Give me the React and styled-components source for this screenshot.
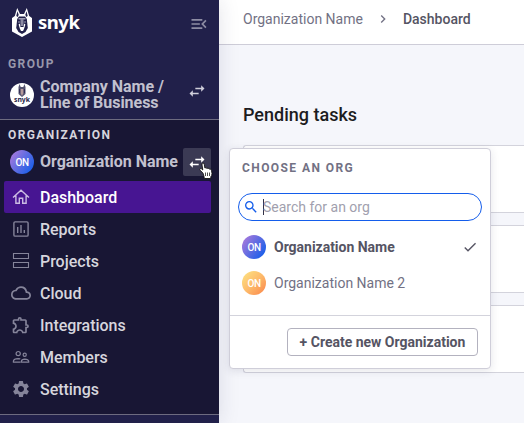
import React from "react";
import styled, { createGlobalStyle, css } from "styled-components";
import {
  MdMenuOpen, MdSwapHoriz, MdOutlineCloud, MdOutlineExtension, MdSettings,
  MdChevronRight, MdSearch, MdCheck,
} from "react-icons/md";

const GlobalStyle = createGlobalStyle`
  * { box-sizing: border-box; }
  body { margin: 0; font-family: Roboto, sans-serif; overflow: hidden; }
  h2, p { margin: 0; }
  svg { display: block; flex: none; }
`;

const Page = styled.div`
  display: flex;
  width: 524px;
  height: 423px;
  background: #f5f6fb;
  overflow: hidden;
`;

const Sidebar = styled.aside`
  position: relative;
  z-index: 1;
  flex: none;
  width: 219px;
  height: 423px;
  background: #21204a;
  box-shadow: 0 0 20px rgba(33, 32, 74, 0.13);
`;

const Brand = styled.div`
  height: 56px;
  padding: 7px 10px 0 12px;
  display: flex;
  align-items: flex-start;
  justify-content: space-between;
`;

const Logo = styled.div`
  display: flex;
  gap: 6px;
`;

const Wordmark = styled.span`
  font: 700 18.5px/28px "Noto Sans", sans-serif;
  letter-spacing: -0.5px;
  color: #fff;
  margin-top: 1px;
`;

const Collapse = styled.div`
  margin-top: 7px;
  color: #8d8ca3;
`;

const Group = styled.div`
  height: 63px;
`;

const SectionLabel = styled.p`
  padding-left: 8px;
  font-size: 12px;
  line-height: 16px;
  font-weight: 700;
  letter-spacing: 1.4px;
  color: ${(p) => p.$color};
`;

const OrgRow = styled.div`
  display: flex;
  align-items: center;
  height: ${(p) => p.$height};
  padding: 0 8px 0 10px;
`;

const OrgName = styled.div`
  flex: 1;
  margin-left: 6px;
  font-size: 16px;
  line-height: 16px;
  font-weight: 700;
  letter-spacing: -0.02px;
  white-space: nowrap;
  color: #c2c1cf;
`;

const SwapButton = styled.div`
  position: relative;
  flex: none;
  width: 28px;
  height: 28px;
  margin-top: ${(p) => (p.$active ? "0" : "-8px")};
  display: flex;
  align-items: center;
  justify-content: center;
  border-radius: 2px;
  color: ${(p) => (p.$active ? "#fff" : "#cfceda")};
  background: ${(p) => (p.$active ? "#3b3a54" : "transparent")};
`;

const Cursor = styled.svg`
  position: absolute;
  left: 15px;
  top: 14px;
`;

const OrgSection = styled.section`
  height: 296px;
  padding-top: 7px;
  background: #181634;
  border-top: 1px solid #6d6b80;
  border-bottom: 1px solid #6d6b80;
`;

const Nav = styled.nav`
  margin: 0 8px 0 4px;
`;

const NavItem = styled.div`
  display: flex;
  align-items: center;
  height: 32px;
  padding-left: 7px;
  gap: 9px;
  border-radius: 2px;
  font-size: 16px;
  font-weight: 500;
  letter-spacing: -0.03px;
  color: #d6d5dd;
  svg { color: #85849a; }
  ${(p) => p.$active && css`
    background: #471592;
    color: #fff;
    svg { color: #cbbce3; }
  `}
`;

const avatarColors = {
  violet: "linear-gradient(125deg, #a879dc 8%, #596be2 52%, #145deb 92%)",
  amber: "linear-gradient(135deg, #fddb7d 12%, #fdbb6b 50%, #fb8f50 90%)",
};

const Avatar = styled.div`
  flex: none;
  width: 24px;
  height: 24px;
  border-radius: 50%;
  display: flex;
  align-items: center;
  justify-content: center;
  background: ${(p) => avatarColors[p.$tone]};
  color: #fff;
  font-size: 10px;
  font-weight: 500;
  letter-spacing: -0.4px;
`;

const Main = styled.main`
  flex: 1;
  min-width: 0;
`;

const Breadcrumb = styled.header`
  height: 45px;
  padding: 0 0 6px 24px;
  display: flex;
  align-items: center;
  background: #fff;
  border-bottom: 1px solid #cecdd8;
  font-size: 14px;
  color: #727184;
  svg { margin: 0 12px; }
`;

const Current = styled.span`
  font-weight: 500;
  color: #555463;
`;

const Title = styled.h2`
  margin: 58px 0 0 24px;
  font-size: 18px;
  line-height: 24px;
  font-weight: 500;
  color: #1c1c21;
`;

const Cards = styled.div`
  display: grid;
  gap: 12px;
  margin: 18px 0 0 24px;
`;

const Card = styled.div`
  height: 68px;
  border: 1px solid #d3d3dc;
  border-right: 0;
  border-radius: 3px 0 0 3px;
  background: #fff;
`;

const Popover = styled.div`
  position: absolute;
  z-index: 2;
  left: 229px;
  top: 148px;
  width: 262px;
  height: 221px;
  border: 1px solid #cfced9;
  border-radius: 4px;
  background: #fff;
  box-shadow: 0 2px 8px rgba(40, 40, 70, 0.12);
`;

const PopoverTitle = styled.p`
  padding: 11px 12px 0;
  font-size: 12px;
  line-height: 16px;
  font-weight: 700;
  letter-spacing: 1.42px;
  color: #727184;
`;

const Search = styled.div`
  display: flex;
  align-items: center;
  height: 28px;
  margin: 17px 8px 8px;
  padding-left: 4px;
  border: 1px solid #145deb;
  border-radius: 14px;
  font-size: 14px;
  color: #a19fae;
  svg { color: #145deb; }
`;

const Caret = styled.span`
  width: 1px;
  height: 16px;
  margin: 0 -1px 0 4px;
  background: #333246;
`;

const Choice = styled.div`
  display: flex;
  align-items: center;
  height: 36px;
  padding: 0 12px;
  gap: 8px;
  font-size: 14px;
  font-weight: ${(p) => (p.$selected ? 700 : 400)};
  letter-spacing: ${(p) => (p.$selected ? "-0.02px" : "0")};
  color: ${(p) => (p.$selected ? "#555463" : "#727184")};
  > svg { margin-left: auto; }
`;

const Footer = styled.div`
  display: flex;
  justify-content: flex-end;
  margin-top: 14px;
  padding: 12px 12px 0;
  border-top: 1px solid #d3d3dc;
`;

const CreateButton = styled.button`
  width: 191px;
  height: 28px;
  padding: 0;
  border: 1px solid #b3b2bf;
  border-radius: 4px;
  background: #fff;
  font: 700 14px Roboto, sans-serif;
  white-space: nowrap;
  color: #555463;
`;

function DogMark() {
  return (
    <svg width="20" height="30" viewBox="0 0 20 30">
      <path d="M0 11 2.8 9 5.2 1 8 7H12L14.8 1 17.2 9 20 11V24.5L10 30 0 24.5Z" fill="#fff" />
      <path d="M4.3 9 5.4 4.3 6.7 7.8 5.8 10ZM15.7 9 14.6 4.3 13.3 7.8 14.2 10Z" fill="#21204a" />
      <path d="M5.2 12 7 9.5H13L14.8 12 15.8 21 13.5 25 10 27 6.5 25 4.2 21Z" fill="#21204a" />
      <path d="M6.5 11H13.5V12.6H6.5ZM6 14.5H8.2V15.6H6ZM11.8 14.5H14V15.6H11.8Z" fill="#9d9cb1" />
      <path d="M8.5 12H11.5V19H8.5Z" fill="#8c8ba3" />
      <path d="M6.6 17.5 8 22 9 24H11L12 22 13.4 17.5 12.2 16.5 11.5 20H8.5L7.8 16.5Z" fill="#fff" />
    </svg>
  );
}

function CompanyAvatar() {
  return (
    <svg width="24" height="24" viewBox="0 0 24 24">
      <circle cx="12" cy="12" r="12" fill="#fff" />
      <path d="M8.5 4 9.6 1 10.7 4H13.3L14.4 1 15.5 4V11L12 14 8.5 11Z" fill="#55536f" />
      <path d="M10.5 6H13.5V10L12 13 10.5 10Z" fill="#b79b9b" />
      <path d="M9.7 6V10M14.3 6V10" stroke="#292752" />
      <text x="12" y="19.3" textAnchor="middle" textLength="16" lengthAdjust="spacingAndGlyphs" fontFamily="Noto Sans, sans-serif" fontWeight="700" fontSize="7.5" fill="#252449">snyk</text>
    </svg>
  );
}

function HandCursor() {
  return (
    <Cursor width="16" height="18" viewBox="0 0 16 18">
      <path d="M5 11.2 2.5 8.6Q1 7.2 2.2 6.6 3.4 6.3 4.8 8L4 3Q3.7 1.2 4.9 1 6 .9 6.3 2.5L6.9 6Q8.1 5 8.9 6.4 10.3 5.5 11.1 7 13 6.3 13.5 8.6L14 11.5Q14 13.8 12.8 14.8V16.5H6.3L6 14.5Z" fill="#fff" stroke="#111" strokeWidth=".9" />
      <path d="M7.5 10.5V14M9.5 10.5V14M11.5 10.5V14" stroke="#222" strokeWidth=".8" />
    </Cursor>
  );
}

function LineIcon({ children }) {
  return (
    <svg width="20" height="20" viewBox="0 0 20 20" fill="none" stroke="currentColor" strokeWidth="1.4">
      {children}
    </svg>
  );
}

function HomeIcon() {
  return <LineIcon><path d="M2 10.4 10 3.2 18 10.4M4.9 8.5V16.3H8.3V11.2H11.7V16.3H15.1V8.5" /></LineIcon>;
}

function ReportsIcon() {
  return <LineIcon><rect x="2.9" y="2.9" width="14.2" height="14.2" rx="1.2" /><path d="M6.7 8V14M10 6V14M13.3 11V14" /></LineIcon>;
}

function ProjectsIcon() {
  return <LineIcon><path d="M2.5 2.5H17.5V7.5H2.5ZM2.5 11.5H17.5V16.5H2.5Z" strokeWidth="1.1" /></LineIcon>;
}

function MembersIcon() {
  return (
    <LineIcon>
      <g strokeWidth="1.2">
        <circle cx="7.2" cy="6.6" r="2.1" />
        <circle cx="13.7" cy="7.8" r="1.6" />
        <path d="M9.5 15.1H2.4V14.1Q2.7 11.7 7.2 11.6 8.4 11.6 9.3 11.9M10.4 15.1H17.7V14.2Q17.2 12.3 13.9 12.2 10.5 12.3 10.4 14.2Z" />
      </g>
    </LineIcon>
  );
}

const navigation = [
  ["Dashboard", HomeIcon],
  ["Reports", ReportsIcon],
  ["Projects", ProjectsIcon],
  ["Cloud", MdOutlineCloud],
  ["Integrations", MdOutlineExtension],
  ["Members", MembersIcon],
  ["Settings", MdSettings],
];

export default function App() {
  return (
    <>
      <GlobalStyle />
      <Page>
        <Sidebar>
          <Brand>
            <Logo><DogMark /><Wordmark>snyk</Wordmark></Logo>
            <Collapse><MdMenuOpen size={20} /></Collapse>
          </Brand>
          <Group>
            <SectionLabel $color="#9897aa">GROUP</SectionLabel>
            <OrgRow $height="46px">
              <CompanyAvatar />
              <OrgName>Company Name /<br />Line of Business</OrgName>
              <SwapButton><MdSwapHoriz size={20} /></SwapButton>
            </OrgRow>
          </Group>
          <OrgSection>
            <SectionLabel $color="#d6d5dd">ORGANIZATION</SectionLabel>
            <OrgRow $height="38px">
              <Avatar $tone="violet">ON</Avatar>
              <OrgName>Organization Name</OrgName>
              <SwapButton $active><MdSwapHoriz size={20} /><HandCursor /></SwapButton>
            </OrgRow>
            <Nav>
              {navigation.map(([label, Icon], i) => (
                <NavItem key={label} $active={i === 0}><Icon size={20} />{label}</NavItem>
              ))}
            </Nav>
          </OrgSection>
        </Sidebar>
        <Main>
          <Breadcrumb>
            <span>Organization Name</span>
            <MdChevronRight size={16} />
            <Current>Dashboard</Current>
          </Breadcrumb>
          <Title>Pending tasks</Title>
          <Cards><Card /><Card /><Card /></Cards>
        </Main>
        <Popover>
          <PopoverTitle>CHOOSE AN ORG</PopoverTitle>
          <Search><MdSearch size={16} /><Caret />Search for an org</Search>
          <Choice $selected><Avatar $tone="violet">ON</Avatar>Organization Name<MdCheck size={16} /></Choice>
          <Choice><Avatar $tone="amber">ON</Avatar>Organization Name 2</Choice>
          <Footer><CreateButton>+ Create new Organization</CreateButton></Footer>
        </Popover>
      </Page>
    </>
  );
}
